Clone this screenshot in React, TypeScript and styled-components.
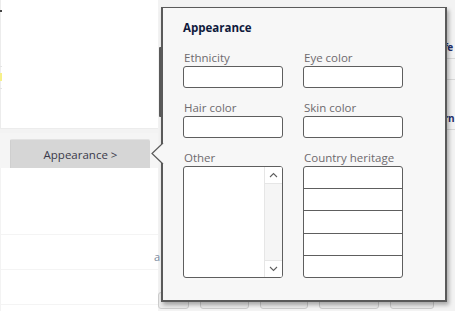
import styled, { createGlobalStyle } from "styled-components";

const GlobalStyle = createGlobalStyle`
  html, body {
    margin: 0;
    padding: 0;
    background: #ffffff;
  }
  body {
    font-family: "Open Sans", "Noto Sans", sans-serif;
  }
`;

const countryRows = [0, 1, 2, 3, 4];
const footerButtons = [31, 49, 48, 60, 44];

const App = () => {
  return (
    <>
      <GlobalStyle />
      <Page>
        <LeftColumn>
          <TopPanel>
            <EdgeMark $top={10} $color="#444" $height={2} />
            <EdgeMark $top={66} $color="#e4e4e4" $height={1} />
            <EdgeMark $top={73} $color="#f6f08a" $height={8} />
            <EdgeMark $top={88} $color="#e4e4e4" $height={1} />
          </TopPanel>
          <ButtonRow>
            <MenuButton>Appearance &gt;</MenuButton>
          </ButtonRow>
          <BottomPanel>
            <FaintLine />
            <FaintLine />
            <FaintLine />
            <PeekText>a</PeekText>
          </BottomPanel>
        </LeftColumn>

        <RightColumn>
          <RightBody>
            <ScrollThumb />
            <RightStrip>
              <StripCell $height={47}>
                <StripText>fe</StripText>
              </StripCell>
              <StripCell $height={21} />
              <StripCell $height={50}>
                <StripText>rn</StripText>
              </StripCell>
            </RightStrip>
          </RightBody>
          <Footer>
            {footerButtons.map((w, i) => (
              <FooterButton key={i} style={{ width: w }} />
            ))}
          </Footer>
        </RightColumn>

        <Popover>
          <Arrow width="13" height="22" viewBox="0 0 13 22">
            <path d="M12 0 L1 10.5 L12 21" fill="#f7f7f7" stroke="#5a5a5a" strokeWidth="1.2" />
          </Arrow>
          <Title>Appearance</Title>
          <FieldGrid>
            <Field>
              <Label>Ethnicity</Label>
              <Input />
            </Field>
            <Field>
              <Label>Eye color</Label>
              <Input />
            </Field>
            <Field>
              <Label>Hair color</Label>
              <Input />
            </Field>
            <Field>
              <Label>Skin color</Label>
              <Input />
            </Field>
            <Field>
              <Label>Other</Label>
              <TextBox>
                <TextArea />
                <Scrollbar>
                  <ScrollButton>
                    <svg width="9" height="6" viewBox="0 0 9 6">
                      <path d="M1 5 L4.5 1.5 L8 5" fill="none" stroke="#606060" strokeWidth="1.1" />
                    </svg>
                  </ScrollButton>
                  <ScrollTrack />
                  <ScrollButton>
                    <svg width="9" height="6" viewBox="0 0 9 6">
                      <path d="M1 1 L4.5 4.5 L8 1" fill="none" stroke="#606060" strokeWidth="1.1" />
                    </svg>
                  </ScrollButton>
                </Scrollbar>
              </TextBox>
            </Field>
            <Field>
              <Label>Country heritage</Label>
              <List>
                {countryRows.map((r) => (
                  <ListRow key={r} />
                ))}
              </List>
            </Field>
          </FieldGrid>
        </Popover>
      </Page>
    </>
  );
};

export default App;

const Page = styled.div`
  position: relative;
  width: 455px;
  height: 311px;
  overflow: hidden;
  display: grid;
  grid-template-columns: 158px 1fr;
  background: #f3f3f3;
`;

const LeftColumn = styled.div`
  display: flex;
  flex-direction: column;
`;

const TopPanel = styled.div`
  position: relative;
  height: 128px;
  background: #ffffff;
  border-left: 1px solid #ececec;
  border-bottom: 1px solid #ececec;
`;

const EdgeMark = styled.div<{ $top: number; $color: string; $height: number }>`
  position: absolute;
  left: -1px;
  top: ${(p) => p.$top}px;
  width: 2px;
  height: ${(p) => p.$height}px;
  background: ${(p) => p.$color};
`;

const ButtonRow = styled.div`
  margin-top: 4px;
  height: 35px;
  padding: 6px 0 0 10px;
  box-sizing: border-box;
  background: #f5f5f5;
`;

const MenuButton = styled.div`
  width: 140px;
  height: 29px;
  box-sizing: border-box;
  background: #d6d6d6;
  border-top: 1px solid #e2e2e2;
  border-left: 1px solid #cfcfcf;
  border-radius: 2px 2px 0 0;
  display: flex;
  align-items: center;
  justify-content: center;
  font-size: 11.5px;
  color: #3a3a4a;
`;

const BottomPanel = styled.div`
  position: relative;
  flex: 1;
  background: #ffffff;
  margin-left: 1px;
  padding-top: 66px;
  display: flex;
  flex-direction: column;
  gap: 34px;
`;

const FaintLine = styled.div`
  height: 1px;
  background: #f4f4f4;
`;

const PeekText = styled.span`
  position: absolute;
  right: -2px;
  top: 81px;
  font-size: 11px;
  color: #7a8aa0;
`;

const RightColumn = styled.div`
  display: flex;
  flex-direction: column;
  background: #f3f3f3;
`;

const RightBody = styled.div`
  flex: 1;
  display: flex;
  justify-content: space-between;
`;

const ScrollThumb = styled.div`
  margin: 47px 0 0 1px;
  width: 3px;
  height: 70px;
  border-radius: 1px;
  background: #5c5c5c;
`;

const RightStrip = styled.div`
  margin-top: 12px;
  width: 12px;
  display: flex;
  flex-direction: column;
`;

const StripCell = styled.div<{ $height: number }>`
  height: ${(p) => p.$height}px;
  flex-shrink: 0;
  box-sizing: border-box;
  border-bottom: 1px solid #d8d8d8;
  display: flex;
  align-items: flex-end;
  padding: 0 0 4px 1px;
`;

const StripText = styled.span`
  font-size: 10px;
  font-weight: 700;
  letter-spacing: -0.5px;
  color: #1f2f6a;
  white-space: nowrap;
`;

const Footer = styled.div`
  height: 17px;
  display: flex;
  gap: 11px;
  margin-bottom: 2px;
`;

const FooterButton = styled.div`
  flex-shrink: 0;
  box-sizing: border-box;
  border: 1px solid #cccccc;
  border-radius: 3px;
  background: #ececec;
`;

const Popover = styled.div`
  position: absolute;
  left: 161px;
  top: 7px;
  width: 286px;
  height: 295px;
  box-sizing: border-box;
  background: #f7f7f7;
  border-style: solid;
  border-color: #5a5a5a;
  border-width: 1px 2px 2px 2px;
  padding: 12px 0 0 20px;
  box-shadow: 2px 3px 4px rgba(0, 0, 0, 0.3);
  font-size: 11.5px;
`;

const Arrow = styled.svg`
  position: absolute;
  left: -12px;
  top: 135px;
  display: block;
`;

const Title = styled.div`
  height: 16px;
  line-height: 16px;
  font-size: 11.5px;
  font-weight: 700;
  color: #0f1a3c;
  margin-bottom: 14px;
`;

const FieldGrid = styled.div`
  display: grid;
  grid-template-columns: 100px 100px;
  column-gap: 20px;
  row-gap: 12px;
`;

const Field = styled.div`
  display: flex;
  flex-direction: column;
`;

const Label = styled.div`
  height: 16px;
  line-height: 16px;
  color: #6e6a6e;
  white-space: nowrap;
  padding-left: 1px;
`;

const Input = styled.div`
  height: 22px;
  box-sizing: border-box;
  background: #ffffff;
  border: 1px solid #5e5e5e;
  border-radius: 3px;
`;

const TextBox = styled.div`
  height: 112px;
  box-sizing: border-box;
  background: #ffffff;
  border: 1px solid #5e5e5e;
  border-radius: 3px;
  display: flex;
  overflow: hidden;
`;

const TextArea = styled.div`
  flex: 1;
`;

const Scrollbar = styled.div`
  width: 17px;
  border-left: 1px solid #e6e6e6;
  background: #fafafa;
  display: flex;
  flex-direction: column;
`;

const ScrollButton = styled.div`
  height: 16px;
  display: flex;
  align-items: center;
  justify-content: center;
  background: #ffffff;
  &:first-child {
    border-bottom: 1px solid #e6e6e6;
  }
  &:last-child {
    border-top: 1px solid #e6e6e6;
  }
`;

const ScrollTrack = styled.div`
  flex: 1;
  background: #f5f5f5;
`;

const List = styled.div`
  height: 112px;
  box-sizing: border-box;
  background: #ffffff;
  border: 1px solid #5e5e5e;
  border-radius: 3px;
  display: flex;
  flex-direction: column;
  overflow: hidden;
`;

const ListRow = styled.div`
  flex: 1;
  border-bottom: 1px solid #5e5e5e;
  &:last-child {
    border-bottom: none;
  }
`;
